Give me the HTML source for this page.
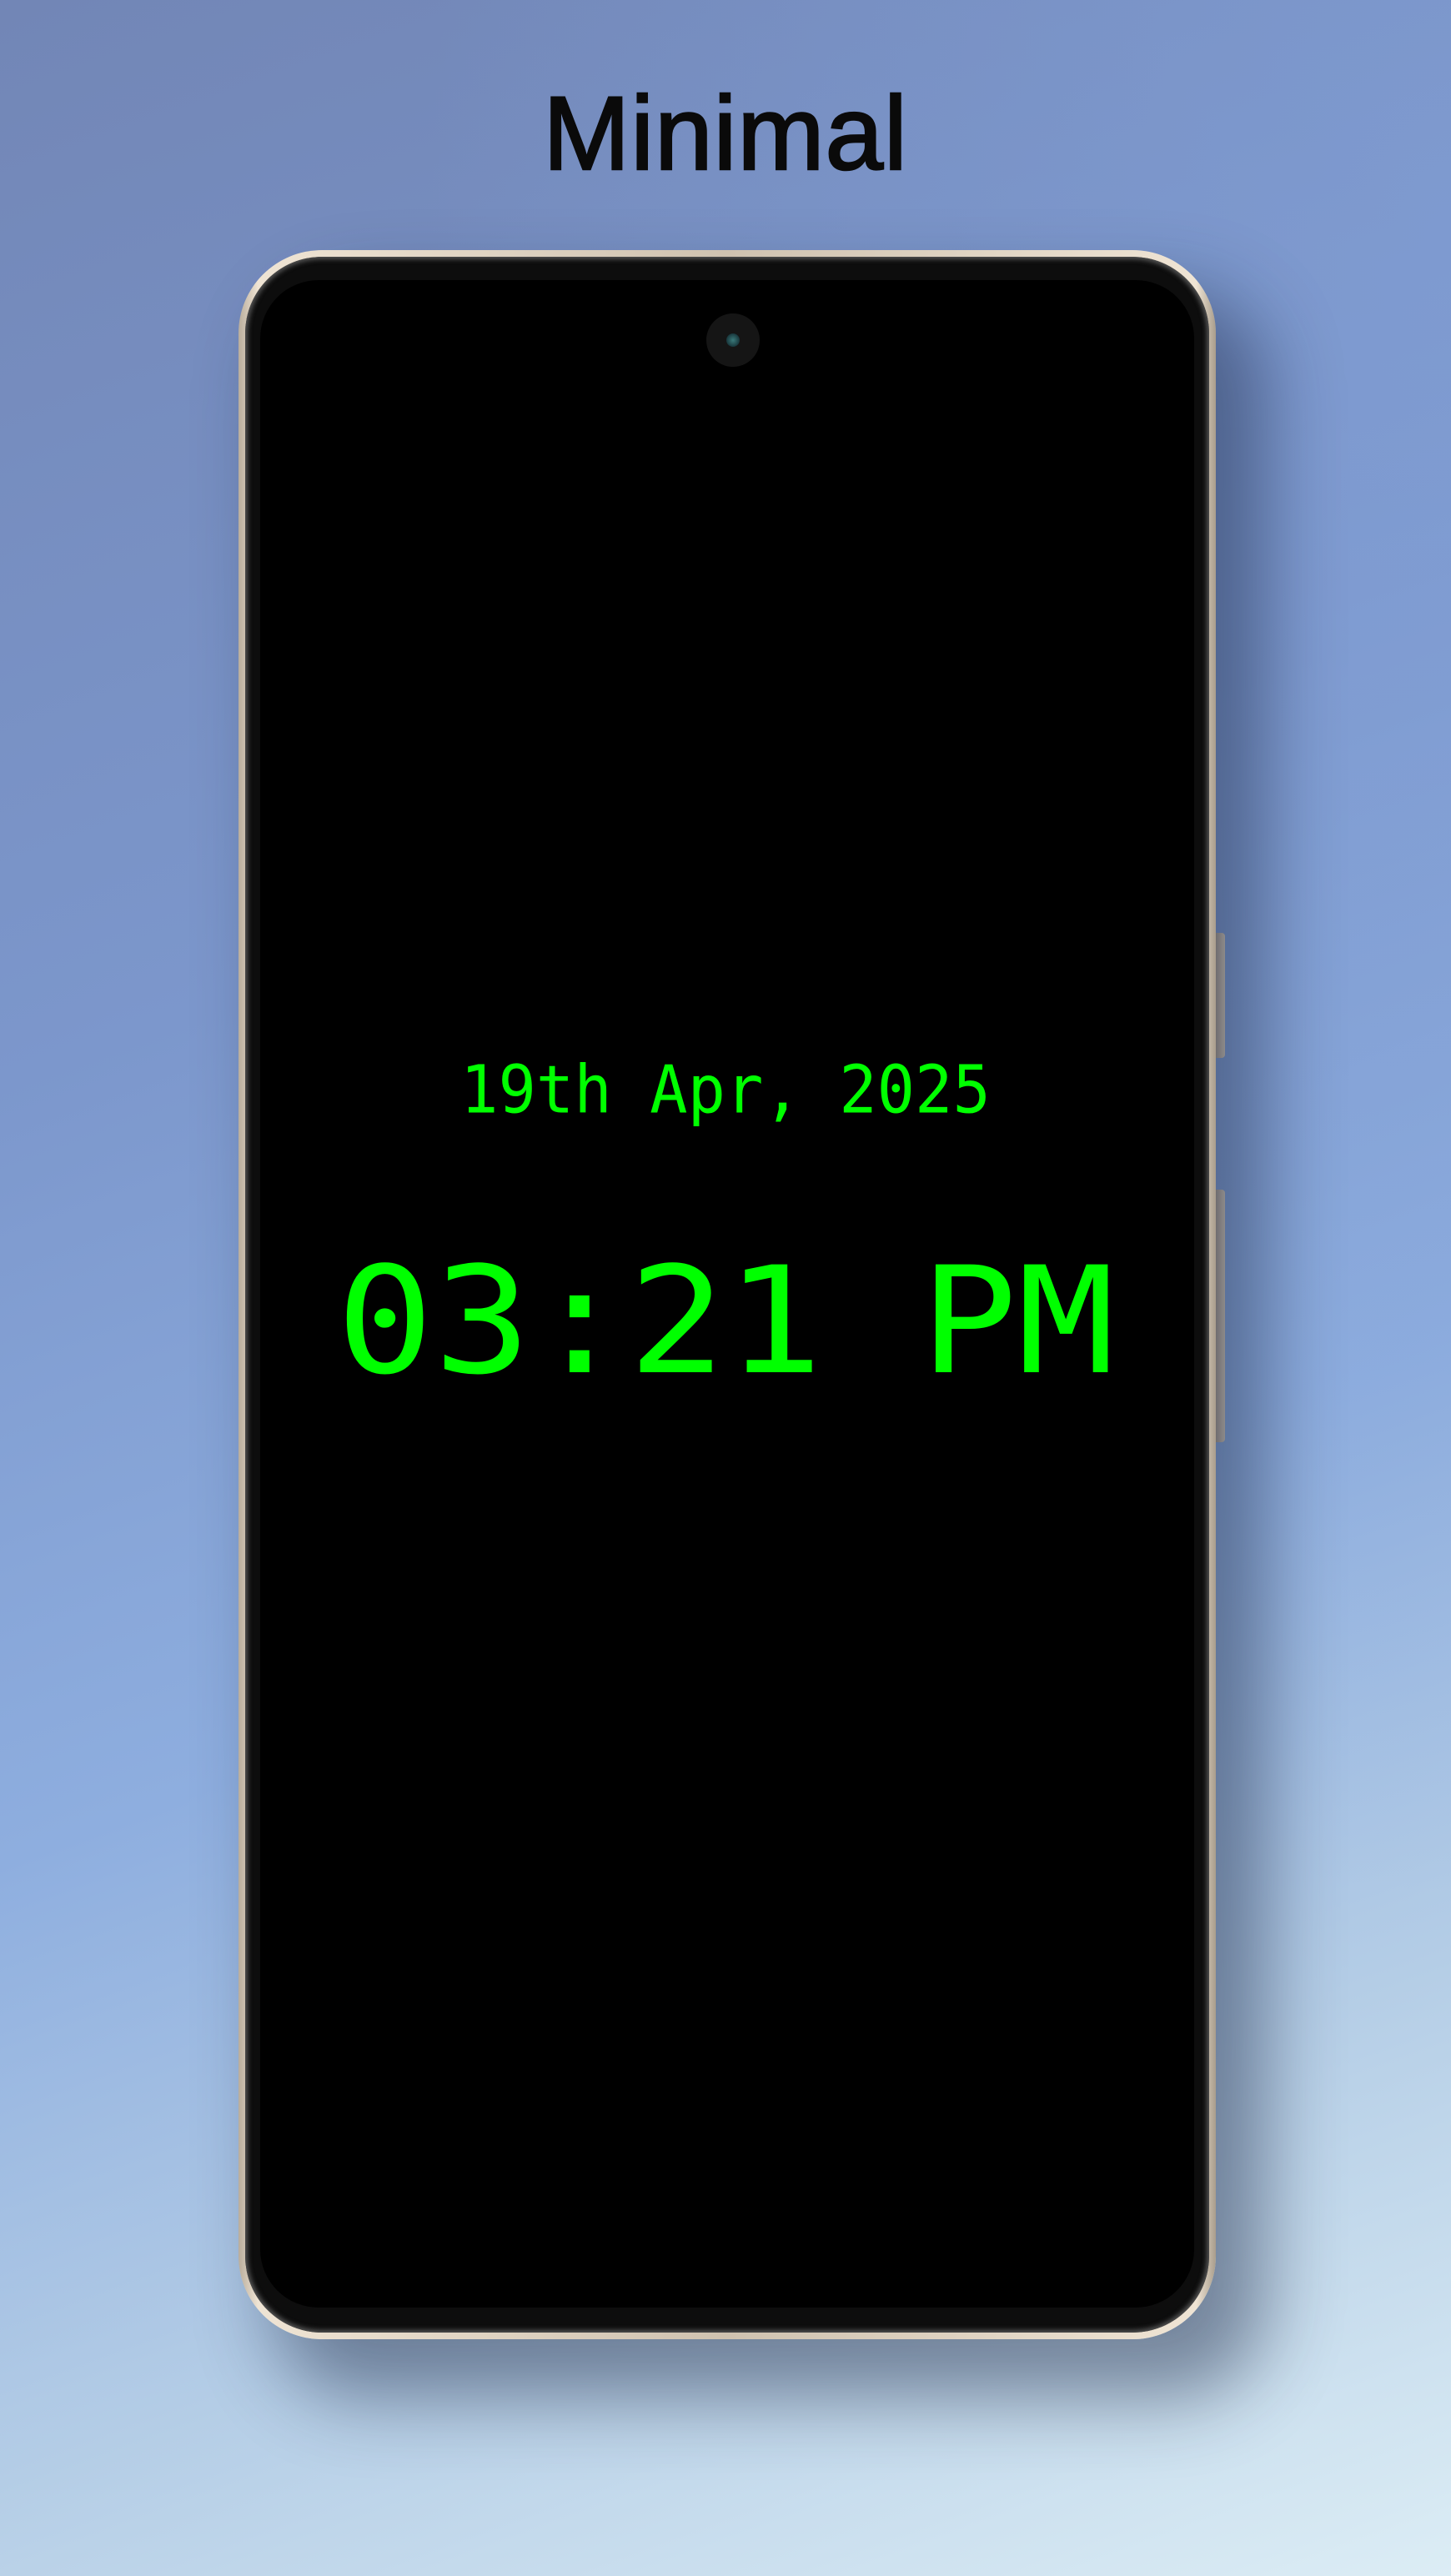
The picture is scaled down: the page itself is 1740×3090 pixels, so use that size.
<!DOCTYPE html>
<html><head><style>
html,body{margin:0;padding:0}
body{width:1740px;height:3090px;position:relative;overflow:hidden;
background:linear-gradient(160deg,#7286b6 0%,#7c97cc 35%,#8eaedf 60%,#b4cde6 80%,#dcedf5 100%);
font-family:"Liberation Sans",sans-serif}
.bgglow{position:absolute;inset:0;background:radial-gradient(ellipse at 100% 10%,rgba(130,160,215,.6),transparent 50%)}
.title{position:absolute;left:0;width:1740px;top:86px;text-align:center;font-size:125px;color:#0a0a0a;-webkit-text-stroke:2.5px #0a0a0a;letter-spacing:1px;line-height:150px}
.phone{position:absolute;left:286px;top:300px;width:1172px;height:2506px;border-radius:100px;
background:linear-gradient(90deg,#b9ad9c,#efe4d4 2%,#cfc2b0 50%,#efe4d4 98%,#a99d8c);
box-shadow:50px 60px 90px 10px rgba(20,30,60,.45)}
.bez{position:absolute;left:8px;top:8px;right:8px;bottom:8px;border-radius:92px;background:#0d0d0d;box-shadow:inset 0 0 6px 3px #555}
.screen{position:absolute;left:18px;top:28px;right:18px;bottom:30px;border-radius:70px;background:#000}
.cam{position:absolute;left:553px;top:68px;width:64px;height:64px;border-radius:50%;background:#151515}
.cam:after{content:"";position:absolute;left:24px;top:24px;width:16px;height:16px;border-radius:50%;background:radial-gradient(circle,#3a7a7a,#0a1a22)}
.btn{position:absolute;left:1458px;width:11px;background:linear-gradient(90deg,#b0a595,#dcd0be);border-radius:0 4px 4px 0}
.g{position:absolute;left:0;width:1740px;text-align:center;color:#00ff00;font-family:"DejaVu Sans Mono",monospace;white-space:pre}
.date{top:1258px;font-size:78px;line-height:100px;transform:scale(0.967,1.02)}
.time{top:1466px;font-size:204px;line-height:240px;transform:scale(0.95,0.87)}
</style></head><body>
<div class="bgglow"></div>
<div class="title">Minimal</div>
<div class="btn" style="top:1119px;height:150px"></div>
<div class="btn" style="top:1427px;height:303px"></div>
<div class="phone"><div class="bez"><div class="screen"></div><div class="cam"></div></div></div>
<div class="g date">19th Apr, 2025</div>
<div class="g time">03:21 PM</div>
</body></html>
